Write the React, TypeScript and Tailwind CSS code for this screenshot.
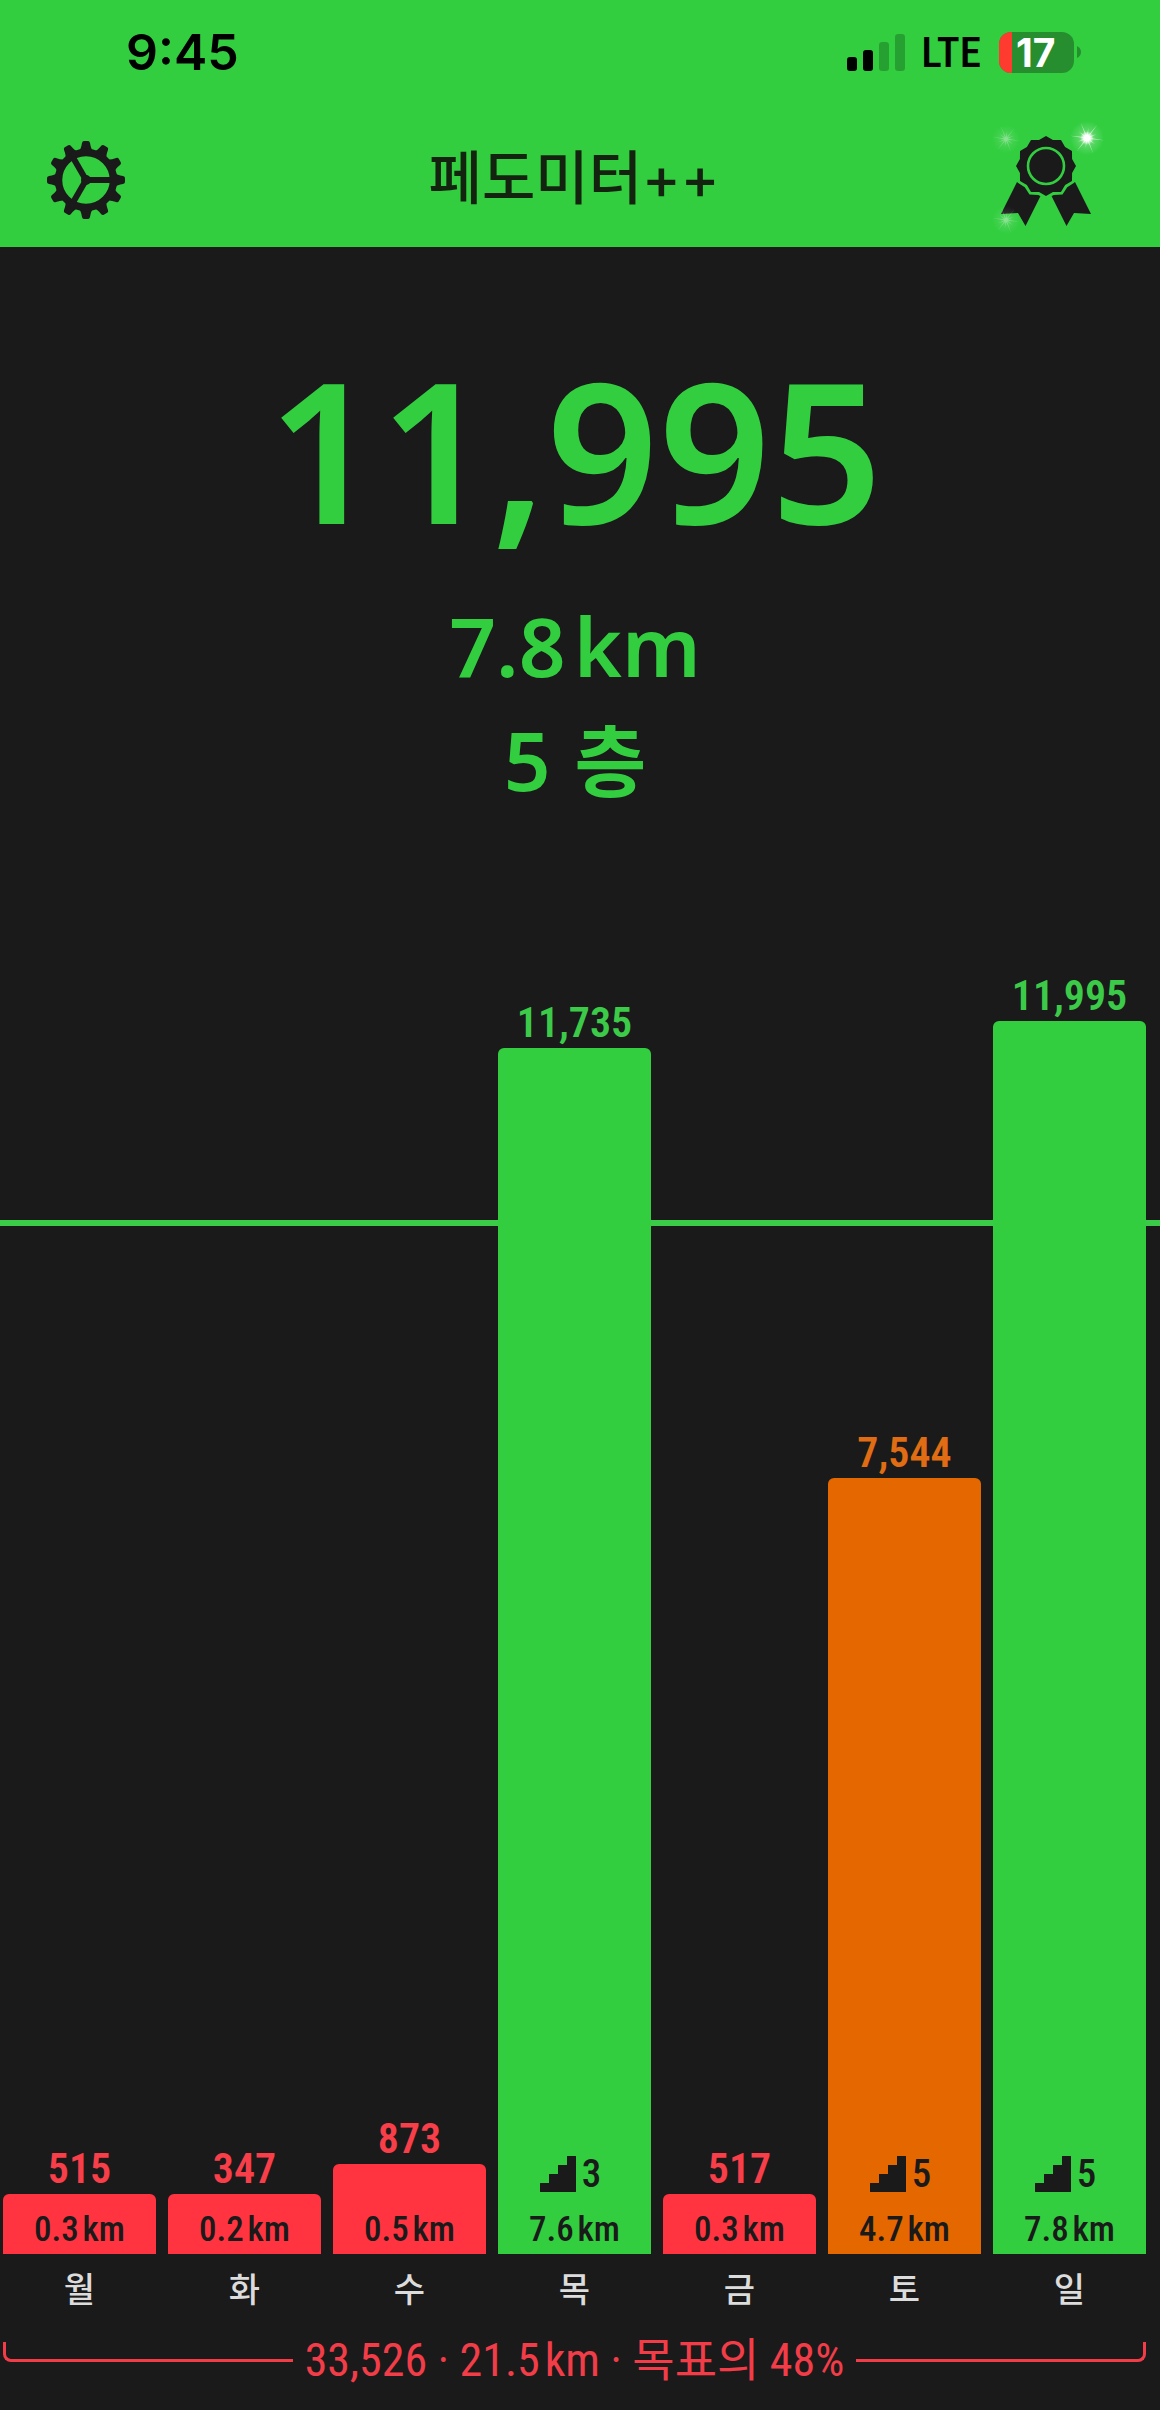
type Tone = 'green' | 'orange' | 'red';

interface Day {
  name: string;
  steps: number;
  km: string;
  floors?: number;
  tone: Tone;
}

const GOAL = 10000;
const PX_PER_STEP = 0.1028;
const MIN_BAR = 60;

const days: Day[] = [
  { name: '월', steps: 515, km: '0.3', tone: 'red' },
  { name: '화', steps: 347, km: '0.2', tone: 'red' },
  { name: '수', steps: 873, km: '0.5', tone: 'red' },
  { name: '목', steps: 11735, km: '7.6', floors: 3, tone: 'green' },
  { name: '금', steps: 517, km: '0.3', tone: 'red' },
  { name: '토', steps: 7544, km: '4.7', floors: 5, tone: 'orange' },
  { name: '일', steps: 11995, km: '7.8', floors: 5, tone: 'green' },
];

const barColor: Record<Tone, string> = {
  green: 'bg-[#32ce40]',
  orange: 'bg-[#e56700]',
  red: 'bg-[#ff3440]',
};
const countColor: Record<Tone, string> = {
  green: 'text-[#3cca49]',
  orange: 'text-[#e06c14]',
  red: 'text-[#f83e49]',
};

const CONDENSED = "font-['Roboto_Condensed','Roboto','Noto_Sans_CJK_KR',sans-serif]";

function polar(r: number, deg: number): string {
  const a = (deg * Math.PI) / 180;
  return `${(r * Math.cos(a)).toFixed(2)},${(r * Math.sin(a)).toFixed(2)}`;
}

function GearIcon() {
  return (
    <svg viewBox="-40 -40 80 80" className="size-20" fill="#1a1a1a" aria-hidden="true">
      {Array.from({ length: 12 }, (_, i) => (
        <path
          key={i}
          transform={`rotate(${i * 30})`}
          d="M-7 -29 Q-5 -31 -4 -37 Q-3.600 -39 -2 -39 H2 Q3.600 -39 4 -37 Q5 -31 7 -29 Z"
        />
      ))}
      <circle r="27.500" fill="none" stroke="#1a1a1a" strokeWidth="7.500" />
      {[0, 120, 240].map((a) => (
        <path key={a} transform={`rotate(${a})`} d="M0 -3 H26 V3 H0 Z" />
      ))}
      <circle r="5" />
    </svg>
  );
}

function Sparkle({ x, y, r, bright }: { x: number; y: number; r: number; bright?: boolean }) {
  const rays = Array.from({ length: 24 }, (_, i) =>
    polar(i % 2 ? r * 0.14 : i % 4 === 0 ? r : r * 0.6, i * 15 + 8),
  ).join(' ');
  return (
    <g transform={`translate(${x} ${y})`}>
      <circle r={r} fill="url(#glow)" opacity={bright ? 0.9 : 0.4} />
      <polygon points={rays} fill="#fff" fillOpacity={bright ? 0.6 : 0.25} />
      {bright && <circle r={r * 0.4} fill="url(#core)" />}
    </g>
  );
}

function AwardIcon() {
  const rosette = Array.from({ length: 24 }, (_, i) => polar(i % 2 ? 27 : 30, i * 15)).join(' ');
  const gap = Array.from({ length: 24 }, (_, i) => polar(i % 2 ? 30 : 33, i * 15)).join(' ');
  return (
    <svg viewBox="988 120 120 120" className="size-[120px]" aria-hidden="true">
      <defs>
        <radialGradient id="glow">
          <stop offset="0" stopColor="#fff" stopOpacity="0.6" />
          <stop offset="0.5" stopColor="#fff" stopOpacity="0.2" />
          <stop offset="1" stopColor="#fff" stopOpacity="0" />
        </radialGradient>
        <radialGradient id="core">
          <stop offset="0" stopColor="#fff" />
          <stop offset="0.4" stopColor="#fff" />
          <stop offset="1" stopColor="#fff" stopOpacity="0" />
        </radialGradient>
      </defs>
      <g fill="#1a1a1a">
        <path d="M1017 182 L1001 214 L1018 213 L1025.500 226 L1042 193 L1046 180 Z" />
        <path d="M1075 182 L1091 214 L1074 213 L1066.500 226 L1050 193 L1046 180 Z" />
      </g>
      <g transform="translate(1046 166)">
        <polygon points={gap} fill="#32ce40" />
        <polygon points={rosette} fill="#1a1a1a" />
        <circle r="18" fill="none" stroke="#32ce40" strokeWidth="2.600" />
      </g>
      <Sparkle x={1087} y={138} r={17} bright />
      <Sparkle x={1006} y={139} r={14} />
      <Sparkle x={1006} y={220} r={14} />
    </svg>
  );
}

function SignalIcon() {
  return (
    <svg viewBox="0 0 58 37" className="h-[37px] w-[58px]" role="img" aria-label="신호 세기">
      <rect x="0" y="23" width="10" height="14" rx="3" />
      <rect x="16" y="16" width="10" height="21" rx="3" />
      <rect x="32" y="8" width="10" height="29" rx="3" fillOpacity="0.22" />
      <rect x="48" y="0" width="10" height="37" rx="3" fillOpacity="0.22" />
    </svg>
  );
}

function Battery() {
  return (
    <div className="flex items-center gap-[3px]">
      <div className="flex w-[75px] rounded-xl bg-[#278e2f]">
        <span className="w-[13px] rounded-l-xl bg-[#ff3b30]" />
        <span className="pl-1 text-[39px] leading-[41px] font-bold text-white">17</span>
      </div>
      <svg viewBox="0 0 4 12" className="h-3 w-1" fill="#278e2f" aria-hidden="true">
        <path d="M0 0 Q4 2 4 6 Q4 10 0 12 Z" />
      </svg>
    </div>
  );
}

function StairsIcon() {
  return (
    <svg viewBox="0 0 4 4" className="size-9" fill="#1a1a1a" shapeRendering="crispEdges" aria-hidden="true">
      <path d="M0 4 V3 H1 V2 H2 V1 H3 V0 H4 V4 Z" />
    </svg>
  );
}

function DayBar({ day }: { day: Day }) {
  const height = Math.max(MIN_BAR, Math.round(day.steps * PX_PER_STEP));
  return (
    <li className="flex flex-col items-center">
      <span className={`text-[42px] leading-[46px] font-semibold ${countColor[day.tone]}`}>
        {day.steps.toLocaleString('en-US')}
      </span>
      <div
        className={`mt-0.5 flex w-full flex-col items-center justify-end rounded-t-md pb-0.5 text-[#1a1a1a] ${barColor[day.tone]}`}
        style={{ height }}
      >
        {day.floors && (
          <span className="mb-3.5 flex items-center gap-1.5 pr-2 text-[39px] leading-[40px] font-medium">
            <StairsIcon />
            {day.floors}
          </span>
        )}
        <span className="text-[35px] leading-[44px] font-medium">{day.km}&#8202;km</span>
      </div>
    </li>
  );
}

export default function App() {
  return (
    <div className="min-h-screen bg-[#1a1a1a] font-['Inter','Noto_Sans_CJK_KR',sans-serif]">
      <header className="bg-[#32ce40]">
        <div className="flex h-[104px] items-center justify-between pr-[79px] pl-[126px] text-black">
          <span className="text-[50px] leading-[60px] font-semibold">9:45</span>
          <div className="flex items-center">
            <SignalIcon />
            <span className={`mr-[18px] ml-4 text-[43px] leading-[48px] font-medium ${CONDENSED}`}>LTE</span>
            <Battery />
          </div>
        </div>
        <nav className="flex h-[143px] items-center justify-between pt-2 pr-[52px] pl-[46px]">
          <button type="button" aria-label="설정" className="w-[120px]">
            <GearIcon />
          </button>
          <h1 className="pr-1.5 pb-1 text-[58px] leading-[80px] font-medium text-[#14230f]">페도미터++</h1>
          <button type="button" aria-label="업적">
            <AwardIcon />
          </button>
        </nav>
      </header>

      <main>
        <section className="flex flex-col items-center pt-[101px] pr-[10px] font-['Noto_Sans','Noto_Sans_CJK_KR',sans-serif] font-semibold text-[#32ce40]">
          <p className="text-[196px] leading-[200px]">11,995</p>
          <p className="mt-10 text-[82px] leading-[114px]">7.8&#8202;km</p>
          <p className="flex items-baseline gap-6 text-[82px] leading-[114px]">
            5 <span className="text-[78px]">층</span>
          </p>
        </section>

        <section className="relative mt-[155px]">
          <div className="absolute inset-x-0 bottom-0" style={{ height: GOAL * PX_PER_STEP + 6 }}>
            <div className="h-[6px] bg-[#3cca49]" />
          </div>
          <ul className={`relative grid grid-cols-7 items-end gap-3 pr-[14px] pl-[3px] ${CONDENSED}`}>
            {days.map((day) => (
              <DayBar key={day.name} day={day} />
            ))}
          </ul>
        </section>

        <ul className="grid grid-cols-7 gap-3 pt-3 pr-[14px] pl-[3px] text-center text-[34px] leading-[48px] font-medium text-[#dcdcdc]">
          {days.map((day) => (
            <li key={day.name}>{day.name}</li>
          ))}
        </ul>

        <footer className={`mt-4 flex items-center gap-3 pr-[14px] pl-[3px] text-[#f23d49] ${CONDENSED}`}>
          <span className="-mt-4 h-5 flex-1 rounded-bl-lg border-b-3 border-l-3 border-current" />
          <p className="text-[46px] leading-[60px]">33,526 · 21.5&#8202;km · 목표의 48%</p>
          <span className="-mt-4 h-5 flex-1 rounded-br-lg border-r-3 border-b-3 border-current" />
        </footer>
      </main>
    </div>
  );
}
